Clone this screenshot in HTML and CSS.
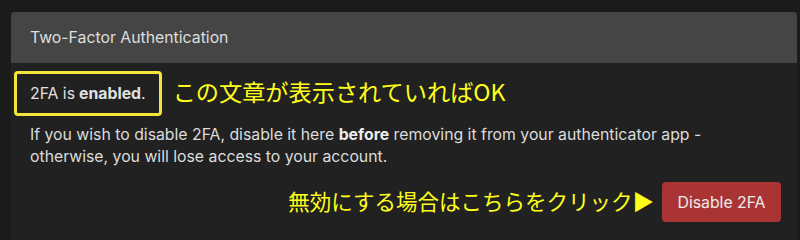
FILE: index.html
```html
<!DOCTYPE html>
<html lang="ja">
<head>
<meta charset="utf-8">
<link rel="stylesheet" href="styles.css">
</head>
<body>
<div class="card">
  <div class="card-header">Two-Factor Authentication</div>
  <div class="card-body">
    <div class="status-row">
      <div class="status-box">2FA is <strong>enabled</strong>.</div>
      <span class="note note-top">この文章が表示されていればOK</span>
    </div>
    <p class="desc">If you wish to disable 2FA, disable it here <strong>before</strong> removing it from your authenticator app -<br>otherwise, you will lose access to your account.</p>
    <div class="action-row">
      <span class="note note-bottom">無効にする場合はこちらをクリック▶</span>
      <button class="btn-danger">Disable 2FA</button>
    </div>
  </div>
</div>
</body>
</html>
```
FILE: styles.css
```css
html, body {
  margin: 0;
  padding: 0;
  background: #1b1b1b;
  height: 240px;
  overflow: hidden;
}
body {
  padding: 12px 3px 0 11px;
  box-sizing: border-box;
  font-family: Inter, "Liberation Sans", sans-serif;
  font-size: 15.8px;
  color: #dcdcdc;
}
.card {
  background: #212121;
  border-radius: 3px;
  height: 228px;
  overflow: hidden;
}
.card-header {
  background: #454545;
  height: 51px;
  border-radius: 3px 3px 0 0;
  display: flex;
  align-items: center;
  padding-left: 19px;
  color: #dedede;
}
.card-body {
  padding: 8px 16px 0 3px;
}
.status-row {
  display: flex;
  align-items: center;
  gap: 11px;
}
.status-box {
  border: 3px solid #f3e53a;
  border-radius: 4px;
  height: 39px;
  padding: 0 13px;
  display: flex;
  align-items: center;
  color: #e0e0e0;
}
.status-box strong {
  font-weight: 700;
  margin-left: 4px;
}
.note {
  font-family: "Noto Sans CJK JP", sans-serif;
  color: #ffff1a;
  line-height: 1;
}
.note-top {
  font-size: 23.2px;
  margin-top: -4px;
}
.note-bottom {
  font-size: 21.5px;
  margin-top: -2px;
}
.desc {
  margin: 8px 0 0 16px;
  line-height: 22px;
  color: #dcdcdc;
}
.desc strong {
  font-weight: 700;
  color: #ececec;
}
.action-row {
  display: flex;
  justify-content: flex-end;
  align-items: center;
  gap: 8px;
  margin-top: 14px;
}
.btn-danger {
  background: #aa3434;
  color: #ececec;
  border: none;
  border-radius: 4px;
  width: 119px;
  height: 40px;
  font-family: Inter, "Liberation Sans", sans-serif;
  font-size: 15.8px;
  padding: 0;
}
```
